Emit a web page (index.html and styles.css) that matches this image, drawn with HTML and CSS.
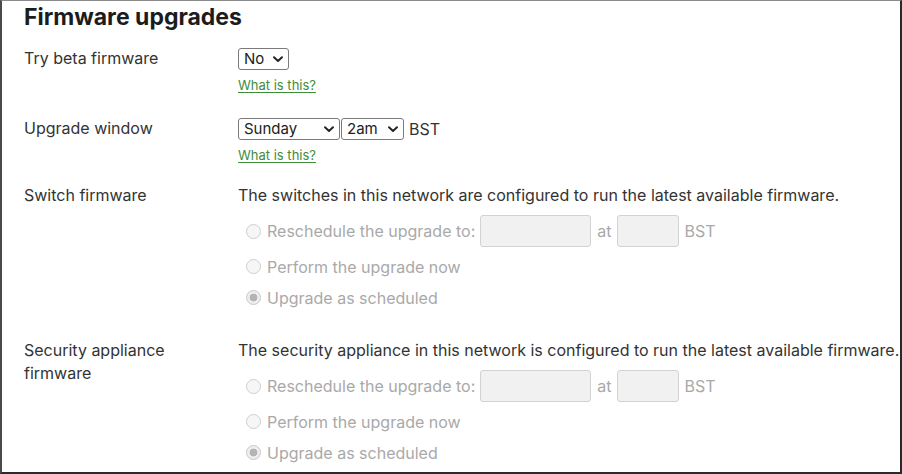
FILE: index.html
```html
<!DOCTYPE html>
<html lang="en">
<head>
<meta charset="utf-8">
<title>Firmware upgrades</title>
<link rel="stylesheet" href="styles.css">
</head>
<body>
<div class="panel">
  <h1 class="title">Firmware upgrades</h1>

  <div class="field field-beta">
    <div class="label">Try beta firmware</div>
    <div class="control">
      <div class="inline">
        <span class="select-wrap sel-no">
          <select class="select"><option>No</option><option>Yes</option></select>
          <svg class="chev" viewBox="0 0 10 7" width="10" height="7"><path d="M1 1.2 L5 5 L9 1.2" fill="none" stroke="#222" stroke-width="1.9" stroke-linecap="round" stroke-linejoin="round"/></svg>
        </span>
      </div>
      <a class="help" href="#">What is this?</a>
    </div>
  </div>

  <div class="field field-window">
    <div class="label">Upgrade window</div>
    <div class="control">
      <div class="inline">
        <span class="select-wrap sel-day">
          <select class="select"><option>Sunday</option></select>
          <svg class="chev" viewBox="0 0 10 7" width="10" height="7"><path d="M1 1.2 L5 5 L9 1.2" fill="none" stroke="#222" stroke-width="1.9" stroke-linecap="round" stroke-linejoin="round"/></svg>
        </span>
        <span class="select-wrap sel-hour">
          <select class="select"><option>2am</option></select>
          <svg class="chev" viewBox="0 0 10 7" width="10" height="7"><path d="M1 1.2 L5 5 L9 1.2" fill="none" stroke="#222" stroke-width="1.9" stroke-linecap="round" stroke-linejoin="round"/></svg>
        </span>
        <span class="tz">BST</span>
      </div>
      <a class="help" href="#">What is this?</a>
    </div>
  </div>

  <div class="field field-switch">
    <div class="label">Switch firmware</div>
    <div class="control">
      <div class="desc">The switches in this network are configured to run the latest available firmware.</div>
      <div class="options">
        <label class="option opt-tall">
          <input class="radio" type="radio" name="sw" disabled>
          <span>Reschedule the upgrade to:</span>
          <input class="text date" type="text" disabled>
          <span class="at">at</span>
          <input class="text time" type="text" disabled>
          <span>BST</span>
        </label>
        <label class="option">
          <input class="radio" type="radio" name="sw" disabled>
          <span>Perform the upgrade now</span>
        </label>
        <label class="option">
          <input class="radio" type="radio" name="sw" checked disabled>
          <span>Upgrade as scheduled</span>
        </label>
      </div>
    </div>
  </div>

  <div class="field field-appliance">
    <div class="label">Security appliance firmware</div>
    <div class="control">
      <div class="desc">The security appliance in this network is configured to run the latest available firmware.</div>
      <div class="options">
        <label class="option opt-tall">
          <input class="radio" type="radio" name="sa" disabled>
          <span>Reschedule the upgrade to:</span>
          <input class="text date" type="text" disabled>
          <span class="at">at</span>
          <input class="text time" type="text" disabled>
          <span>BST</span>
        </label>
        <label class="option">
          <input class="radio" type="radio" name="sa" disabled>
          <span>Perform the upgrade now</span>
        </label>
        <label class="option">
          <input class="radio" type="radio" name="sa" checked disabled>
          <span>Upgrade as scheduled</span>
        </label>
      </div>
    </div>
  </div>
</div>
</body>
</html>
```

FILE: styles.css
```css
* { box-sizing: border-box; }

html, body {
  margin: 0;
  padding: 0;
  background: #fff;
}

body {
  font-family: Inter, "Noto Sans", "Liberation Sans", sans-serif;
  color: #333;
}

.panel {
  width: 902px;
  height: 474px;
  overflow: hidden;
  border-top: 1px solid #8a8a8a;
  border-left: 2px solid #4a4a4a;
  border-right: 2px solid #2a2a2a;
  border-bottom: 2px solid #2a2a2a;
  padding: 2px 0 0 22px;
}

.title {
  margin: 0;
  font-size: 23px;
  line-height: 28px;
  font-weight: 700;
  color: #1c1c1c;
}

.field {
  display: flex;
  align-items: flex-start;
}

.field-beta { margin-top: 17px; }
.field-window { margin-top: 24px; }
.field-switch { margin-top: 20px; }
.field-appliance { margin-top: 30px; }

.label {
  width: 190px;
  margin-right: 24px;
  flex: none;
  font-size: 16px;
  line-height: 23px;
  color: #333;
}

.field-beta .label,
.field-window .label { line-height: 21px; }

.control {
  display: flex;
  flex-direction: column;
  align-items: flex-start;
}

.inline {
  display: flex;
  align-items: center;
  height: 22px;
}

.select-wrap {
  position: relative;
  display: inline-flex;
  height: 22px;
}

.select {
  appearance: none;
  -webkit-appearance: none;
  height: 22px;
  margin: 0;
  border: 1px solid #7a7a7a;
  border-radius: 3px;
  background: #fff;
  font-family: Inter, "Noto Sans", "Liberation Sans", sans-serif;
  font-size: 15px;
  line-height: 20px;
  color: #222;
  padding: 0 0 0 5px;
}

.sel-no .select { width: 51px; }
.sel-day .select { width: 102px; }
.sel-hour { margin-left: 1px; }
.sel-hour .select { width: 63px; }

.chev {
  position: absolute;
  right: 6px;
  top: 8px;
  pointer-events: none;
}

.tz {
  margin-left: 5px;
  font-size: 16px;
  color: #333;
}

.help {
  margin-top: 6px;
  font-size: 13px;
  line-height: 18px;
  color: #3f8c3a;
  text-decoration: underline;
  text-underline-offset: 2px;
}

.desc {
  font-size: 16px;
  line-height: 23px;
  white-space: nowrap;
  color: #333;
}

.options {
  margin-top: 8px;
  display: flex;
  flex-direction: column;
  gap: 8px;
}

.option {
  display: flex;
  align-items: center;
  height: 23px;
  font-size: 16px;
  color: #a9a9a9;
  white-space: nowrap;
}

.opt-tall { height: 32px; }

.radio {
  appearance: none;
  -webkit-appearance: none;
  width: 15px;
  height: 15px;
  margin: 0 6px 0 8px;
  border: 1px solid #cfcfcf;
  border-radius: 50%;
  background: #f6f6f6;
  position: relative;
  flex: none;
}

.radio:checked {
  background: radial-gradient(circle, #b4b4b4 0 3.6px, #eeeeee 4.2px);
  border-color: #c8c8c8;
}

.text {
  height: 32px;
  margin: 0;
  border: 1px solid #d2d2d2;
  border-radius: 3px;
  background: #f1f1f1;
  padding: 0 6px;
}

.date { width: 111px; margin-left: 5px; }
.time { width: 62px; margin-right: 5px; }
.at { margin: 0 6px; }
```
